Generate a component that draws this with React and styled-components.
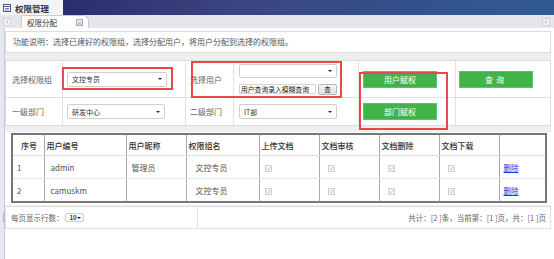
import React from 'react';
import styled, { createGlobalStyle } from 'styled-components';

const GlobalStyle = createGlobalStyle`
    html, body {
        margin: 0;
        padding: 0;
        background: #fff;
    }
    body {
        width: 554px;
        height: 259px;
        overflow: hidden;
        font-family: "Noto Sans CJK SC", "Liberation Sans", sans-serif;
        font-size: 8px;
        color: #555;
    }
`;

const Page = styled.div`
    display: flex;
    flex-direction: column;
    width: 554px;
    height: 259px;
`;

const TopBar = styled.div`
    display: flex;
    height: 15px;
`;

const TitleBox = styled.div`
    display: flex;
    align-items: center;
    gap: 4px;
    width: 60px;
    padding-left: 3px;
    background: #f3f4f7;
    color: #333;
    font-size: 8.5px;
    font-weight: bold;
`;

const Banner = styled.div`
    flex: 1;
    background: linear-gradient(90deg, #2b2e6c 0%, #3b4580 35%, #33518b 70%, #305a93 100%);
`;

const TabStrip = styled.div`
    display: flex;
    align-items: flex-end;
    height: 13px;
    background: #e5e6eb;
`;

const NavButton = styled.div`
    width: 6px;
    height: 6px;
    margin: 0 ${p => p.$right ? '4px' : '8px'} 2px ${p => p.$right ? 'auto' : '3px'};
    border: 1px solid #d2d3d8;
    background: #f2f2f4;
    display: flex;
    align-items: center;
    justify-content: center;
    &::after {
        content: '';
        border-top: 2px solid transparent;
        border-bottom: 2px solid transparent;
        border-${p => p.$right ? 'left' : 'right'}: 2px solid #c5c6cc;
    }
`;

const Tab = styled.div`
    display: flex;
    align-items: center;
    justify-content: space-between;
    width: 56px;
    height: 12px;
    margin-left: 2px;
    padding: 0 5px 0 5px;
    background: #fff;
    border: 1px solid #c9cad0;
    border-bottom: none;
    border-radius: 3px 6px 0 0;
    color: #333;
    font-size: 7.5px;
`;

const CloseBox = styled.span`
    width: 5px;
    height: 5px;
    border: 1px solid #aaa;
    background: #e8e8ea;
    font-size: 5px;
    line-height: 5px;
    text-align: center;
    color: #666;
`;

const Body = styled.div`
    flex: 1;
    display: flex;
`;

const Rail = styled.div`
    width: 4px;
    background: #e6e8ef;
    border-right: 1px solid #c7ccd9;
    display: flex;
    flex-direction: column;
`;

const RailHandle = styled.div`
    margin-top: 185px;
    margin-left: 3px;
    width: 2px;
    height: 7px;
    border: 1px solid #9fb3d6;
    border-right: none;
`;

const Main = styled.div`
    flex: 1;
    padding: 3px 5px 0 0;
    background: #fff;
`;

const Content = styled.div`
    display: flex;
    flex-direction: column;
    background: #efefef;
`;

const Notice = styled.div`
    height: 20px;
    line-height: 20px;
    padding-left: 7px;
    background: #fff;
    border: 1px solid #dcdcdc;
    color: #555;
    margin-bottom: 7px;
`;

const FormGrid = styled.div`
    position: relative;
    display: grid;
    grid-template-columns: 57px 123px 48px 125px 97px 1fr;
    grid-template-rows: 37px 27px;
    background: #fff;
    border: 1px solid #dcdcdc;
    margin-bottom: 6px;
`;

const Cell = styled.div`
    display: flex;
    flex-direction: ${p => p.$stack ? 'column' : 'row'};
    align-items: ${p => p.$stack ? 'flex-start' : 'center'};
    justify-content: ${p => p.$stack ? 'center' : 'flex-start'};
    gap: ${p => p.$stack ? '6px' : '0'};
    padding-left: ${p => p.$pad || 5}px;
    border-right: ${p => p.$last ? 'none' : '1px solid #e2e2e2'};
    border-bottom: ${p => p.$bottom ? 'none' : '1px solid #e2e2e2'};
    color: #555;
`;

const Label = styled.span`
    font-size: 8px;
    color: #666;
`;

const SelectBox = styled.div`
    display: flex;
    align-items: center;
    box-sizing: border-box;
    width: ${p => p.$w}px;
    height: ${p => p.$h || 15}px;
    padding: 0 4px 0 4px;
    background: #fff;
    border: 1px solid #cfcfcf;
    border-radius: 2px;
    color: #333;
    font-size: ${p => p.$fs || 7}px;
    font-weight: ${p => p.$bold ? 'bold' : 'normal'};
    &::after {
        content: '';
        margin-left: auto;
        border-left: 2px solid transparent;
        border-right: 2px solid transparent;
        border-top: 2px solid #222;
    }
`;

const SearchRow = styled.div`
    display: flex;
    align-items: center;
    gap: 2px;
`;

const SearchInput = styled.div`
    box-sizing: border-box;
    width: 77px;
    height: 10px;
    padding-left: 1px;
    border: 1px solid #d5d5d5;
    background: #fff;
    color: #222;
    font-size: 6.8px;
    line-height: 8px;
    white-space: nowrap;
    overflow: hidden;
`;

const SmallButton = styled.div`
    box-sizing: border-box;
    width: 19px;
    height: 11px;
    border: 1px solid #b9b9b9;
    border-radius: 2px;
    background: linear-gradient(#f7f7f7, #dedede);
    color: #222;
    font-size: 6.5px;
    line-height: 9px;
    text-align: center;
`;

const GreenButton = styled.div`
    width: 74px;
    height: 17px;
    background: #40b44a;
    border: 1px solid #5cc265;
    box-sizing: border-box;
    color: #fff;
    font-size: 8px;
    line-height: 15px;
    text-align: center;
    letter-spacing: ${p => p.$spaced ? '3px' : '0'};
`;

const Mark = styled.div`
    position: absolute;
    left: ${p => p.$x}px;
    top: ${p => p.$y}px;
    width: ${p => p.$w}px;
    height: ${p => p.$h}px;
    box-sizing: border-box;
    border: 2px solid #e8474c;
    pointer-events: none;
`;

const Panel = styled.div`
    background: #fff;
    padding: 1px 4px 2px 6px;
    margin-bottom: 1px;
`;

const DataTable = styled.table`
    width: 100%;
    table-layout: fixed;
    border-collapse: collapse;
    border: 2px solid #777;
    color: #555;
    font-size: 8px;
`;

const Th = styled.th`
    height: 20px;
    padding: 0 0 0 ${p => p.$pad || 2}px;
    text-align: left;
    font-weight: 500;
    color: #333;
    border: 1px solid #a8a8a8;
    border-bottom: 1px solid #dedede;
`;

const Td = styled.td`
    height: 22px;
    padding: 0 0 0 ${p => p.$pad || 5}px;
    border-left: 1px solid #a8a8a8;
    border-right: 1px solid #a8a8a8;
    border-bottom: 1px solid #e6e6e6;
`;

const Check = styled.span`
    display: inline-flex;
    align-items: center;
    justify-content: center;
    width: 5px;
    height: 5px;
    border: 1px solid #cfcfcf;
    background: #f6f6f6;
`;

const DeleteLink = styled.a`
    color: #2a2ad8;
    text-decoration: underline;
    font-size: 7.5px;
`;

const Footer = styled.div`
    display: grid;
    grid-template-columns: 192px 1fr;
    height: 21px;
    background: #fff;
    border: 1px solid #dedede;
`;

const FooterCell = styled.div`
    display: flex;
    align-items: center;
    justify-content: ${p => p.$end ? 'flex-end' : 'flex-start'};
    gap: 1px;
    padding: 0 4px 0 5px;
    border-right: ${p => p.$end ? 'none' : '1px solid #e2e2e2'};
    color: #666;
    font-size: 7.5px;
`;

const WindowIcon = () => (
    <svg width="8" height="8" viewBox="0 0 8 8">
        <rect x="0.5" y="0.5" width="7" height="7" fill="#fff" stroke="#4a5a8a" />
        <line x1="0.5" y1="2.5" x2="7.5" y2="2.5" stroke="#4a5a8a" />
        <line x1="2" y1="4.5" x2="6" y2="4.5" stroke="#7a86a8" />
        <line x1="2" y1="6" x2="6" y2="6" stroke="#7a86a8" />
    </svg>
);

const CheckIcon = () => (
    <Check>
        <svg width="5" height="5" viewBox="0 0 5 5">
            <path d="M0.8 2.6 L2 3.8 L4.3 1" fill="none" stroke="#b5b5b5" strokeWidth="0.8" />
        </svg>
    </Check>
);

const rows = [
    { no: 1, code: 'admin', nick: '管理员', group: '文控专员' },
    { no: 2, code: 'camuskm', nick: '', group: '文控专员' },
];

const widths = [32, 82, 60, 73, 60, 60, 60, 60, 47];

class App extends React.Component {
    render () {
        return (
            <Page>
                <GlobalStyle />
                <TopBar>
                    <TitleBox>
                        <WindowIcon />
                        <span>权限管理</span>
                    </TitleBox>
                    <Banner />
                </TopBar>
                <TabStrip>
                    <NavButton />
                    <Tab>
                        <span>权限分配</span>
                        <CloseBox>×</CloseBox>
                    </Tab>
                    <NavButton $right />
                </TabStrip>
                <Body>
                    <Rail>
                        <RailHandle />
                    </Rail>
                    <Main>
                        <Content>
                            <Notice>功能说明：选择已建好的权限组，选择分配用户，将用户分配到选择的权限组。</Notice>

                            <FormGrid>
                                <Cell $pad={6}><Label>选择权限组</Label></Cell>
                                <Cell $pad={4}><SelectBox $w={100}>文控专员</SelectBox></Cell>
                                <Cell $pad={4}><Label>选择用户</Label></Cell>
                                <Cell $stack $pad={5}>
                                    <SelectBox $w={98} $h={14} />
                                    <SearchRow>
                                        <SearchInput>用户查询录入模糊查询</SearchInput>
                                        <SmallButton>查</SmallButton>
                                    </SearchRow>
                                </Cell>
                                <Cell $pad={4}><GreenButton>用户赋权</GreenButton></Cell>
                                <Cell $pad={3} $last><GreenButton $spaced>查询</GreenButton></Cell>

                                <Cell $pad={6} $bottom><Label>一级部门</Label></Cell>
                                <Cell $pad={4} $bottom><SelectBox $w={98}>研发中心</SelectBox></Cell>
                                <Cell $pad={4} $bottom><Label>二级部门</Label></Cell>
                                <Cell $pad={5} $bottom><SelectBox $w={98}>IT部</SelectBox></Cell>
                                <Cell $pad={4} $bottom><GreenButton>部门赋权</GreenButton></Cell>
                                <Cell $last $bottom />

                                <Mark $x={56} $y={6} $w={111} $h={23} />
                                <Mark $x={185} $y={0} $w={151} $h={37} />
                                <Mark $x={353} $y={11} $w={89} $h={58} />
                            </FormGrid>

                            <Panel>
                                <DataTable>
                                    <colgroup>
                                        {widths.map((w, i) => <col key={i} style={{ width: w }} />)}
                                    </colgroup>
                                    <thead>
                                        <tr>
                                            <Th $pad={8}>序号</Th>
                                            <Th>用户编号</Th>
                                            <Th>用户昵称</Th>
                                            <Th>权限组名</Th>
                                            <Th>上传文档</Th>
                                            <Th>文档审核</Th>
                                            <Th>文档删除</Th>
                                            <Th>文档下载</Th>
                                            <Th />
                                        </tr>
                                    </thead>
                                    <tbody>
                                        {rows.map(r => (
                                            <tr key={r.no}>
                                                <Td $pad={4}>{r.no}</Td>
                                                <Td $pad={6}>{r.code}</Td>
                                                <Td $pad={5}>{r.nick}</Td>
                                                <Td $pad={9}>{r.group}</Td>
                                                <Td $pad={5}><CheckIcon /></Td>
                                                <Td $pad={8}><CheckIcon /></Td>
                                                <Td $pad={8}><CheckIcon /></Td>
                                                <Td $pad={8}><CheckIcon /></Td>
                                                <Td $pad={4}><DeleteLink href="#">删除</DeleteLink></Td>
                                            </tr>
                                        ))}
                                    </tbody>
                                </DataTable>
                            </Panel>

                            <Footer>
                                <FooterCell>
                                    <span>每页显示行数：</span>
                                    <SelectBox $w={19} $h={9} $fs={6} $bold>10</SelectBox>
                                </FooterCell>
                                <FooterCell $end>
                                    共计：[2 ]条，当前第：[1 ]页，共：[1 ]页
                                </FooterCell>
                            </Footer>
                        </Content>
                    </Main>
                </Body>
            </Page>
        );
    }
}

export default App;
